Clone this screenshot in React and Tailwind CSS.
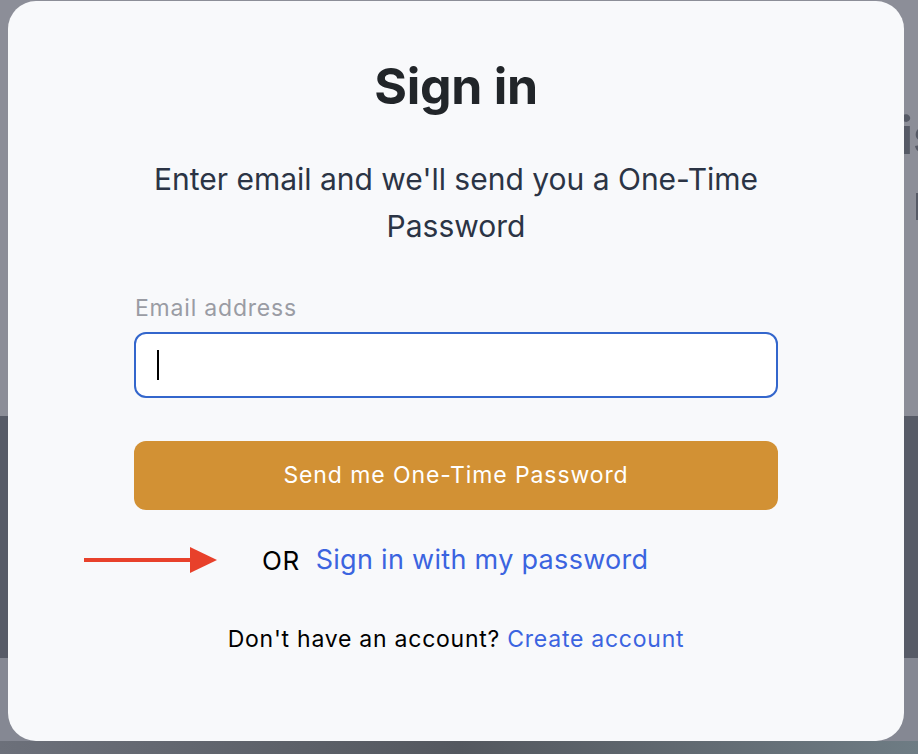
const ArrowRight = () => (
  <svg width="134" height="28" viewBox="0 0 134 28" fill="none">
    <rect x="0" y="12" width="112" height="4" fill="#e8412b" />
    <path d="M106 1L133 14L106 27Z" fill="#e8412b" />
  </svg>
);

export default function App() {
  return (
    <div
      className="relative w-[918px] h-[754px] overflow-hidden bg-[#8c8e98]"
      style={{ fontFamily: "Inter, 'Noto Sans', sans-serif" }}
    >
      {/* page behind the dialog */}
      <div className="flex flex-col h-full">
        <div className="h-[416px] flex flex-col pl-[899px] pt-[110px]">
          <span className="text-[52px] font-bold text-[#565a66] leading-none whitespace-nowrap">is</span>
          <div className="mt-[31px] ml-[17px] w-[3px] h-[27px] bg-[#565a66]" />
        </div>
        <div className="h-[242px] bg-[#575b67]" />
        <div className="h-[83px] bg-[#858893]" />
        <div className="flex-1 bg-gradient-to-r from-[#6c707a] via-[#54585f] to-[#6e7c84]" />
      </div>

      {/* dialog */}
      <div className="absolute left-[8px] top-[1px] w-[896px] h-[740px] rounded-[28px] bg-[#f8f9fb] flex flex-col items-center">
        <h1 className="mt-[50px] text-[50px] leading-[70px] font-bold text-[#212529] tracking-[-0.3px]">
          Sign in
        </h1>
        <p className="mt-[35px] w-[660px] text-center text-[30px] leading-[47px] text-[#2b3445]">
          Enter email and we'll send you a One-Time Password
        </p>

        <div className="mt-[43px] w-[644px] flex flex-col">
          <label className="text-[23px] leading-[30px] tracking-[0.8px] text-[#9a9ca4] pl-[1px]">Email address</label>
          <div className="mt-[9px] h-[66px] rounded-[12px] border-2 border-[#3366cc] bg-white flex items-center pl-[21px]">
            <div className="w-[2px] h-[30px] bg-black" />
          </div>
          <button className="mt-[43px] h-[69px] rounded-[12px] bg-[#d29134] text-white text-[23px] tracking-[0.9px]">
            Send me One-Time Password
          </button>
        </div>

        <div className="mt-[34px] w-[896px] flex items-center h-[32px]">
          <div className="ml-[76px] w-[134px] flex">
            <ArrowRight />
          </div>
          <span className="ml-[44px] text-[26px] tracking-[0.5px] text-black">OR</span>
          <a className="ml-[16px] text-[27px] tracking-[0.3px] text-[#3b64e0]">Sign in with my password</a>
        </div>

        <p className="mt-[48px] text-[23px] leading-[30px] tracking-[0.75px] text-black">
          Don't have an account? <a className="text-[#3b64e0]">Create account</a>
        </p>
      </div>
    </div>
  );
}
